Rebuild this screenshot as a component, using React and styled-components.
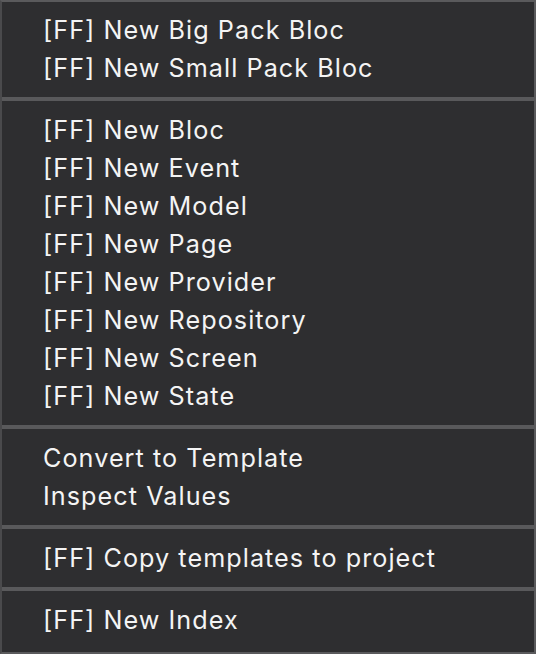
import styled, { createGlobalStyle } from 'styled-components';

const GlobalStyle = createGlobalStyle`
    html, body {
        margin: 0;
        padding: 0;
        background: #2e2e30;
    }
`;

const sections = [
    ['[FF] New Big Pack Bloc', '[FF] New Small Pack Bloc'],
    [
        '[FF] New Bloc',
        '[FF] New Event',
        '[FF] New Model',
        '[FF] New Page',
        '[FF] New Provider',
        '[FF] New Repository',
        '[FF] New Screen',
        '[FF] New State',
    ],
    ['Convert to Template', 'Inspect Values'],
    ['[FF] Copy templates to project'],
    ['[FF] New Index'],
];

const App = () => {
    return (
        <>
            <GlobalStyle />
            <Menu>
                {sections.map((items, ind) => (
                    <Section key={ind} $first={ind === 0}>
                        {items.map((label) => (
                            <Item key={label}>{label}</Item>
                        ))}
                    </Section>
                ))}
            </Menu>
        </>
    );
};

export default App;

const Menu = styled.div`
    box-sizing: border-box;
    width: 536px;
    height: 654px;
    background-color: #2e2e30;
    border: 2px solid #5a5a5c;
    border-left-color: #4a4a4c;
    display: flex;
    flex-direction: column;
`;

const Section = styled.div`
    display: flex;
    flex-direction: column;
    padding: ${(p) => (p.$first ? '9px 0 10px' : '10px 0')};
    border-top: ${(p) => (p.$first ? 'none' : '4px solid #59595b')};
`;

const Item = styled.div`
    height: 38px;
    line-height: 38px;
    padding-left: 41px;
    color: #f4f4f4;
    font-family: Inter, 'Liberation Sans', Arial, sans-serif;
    font-size: 25.2px;
    letter-spacing: 1.05px;
    white-space: nowrap;
`;
